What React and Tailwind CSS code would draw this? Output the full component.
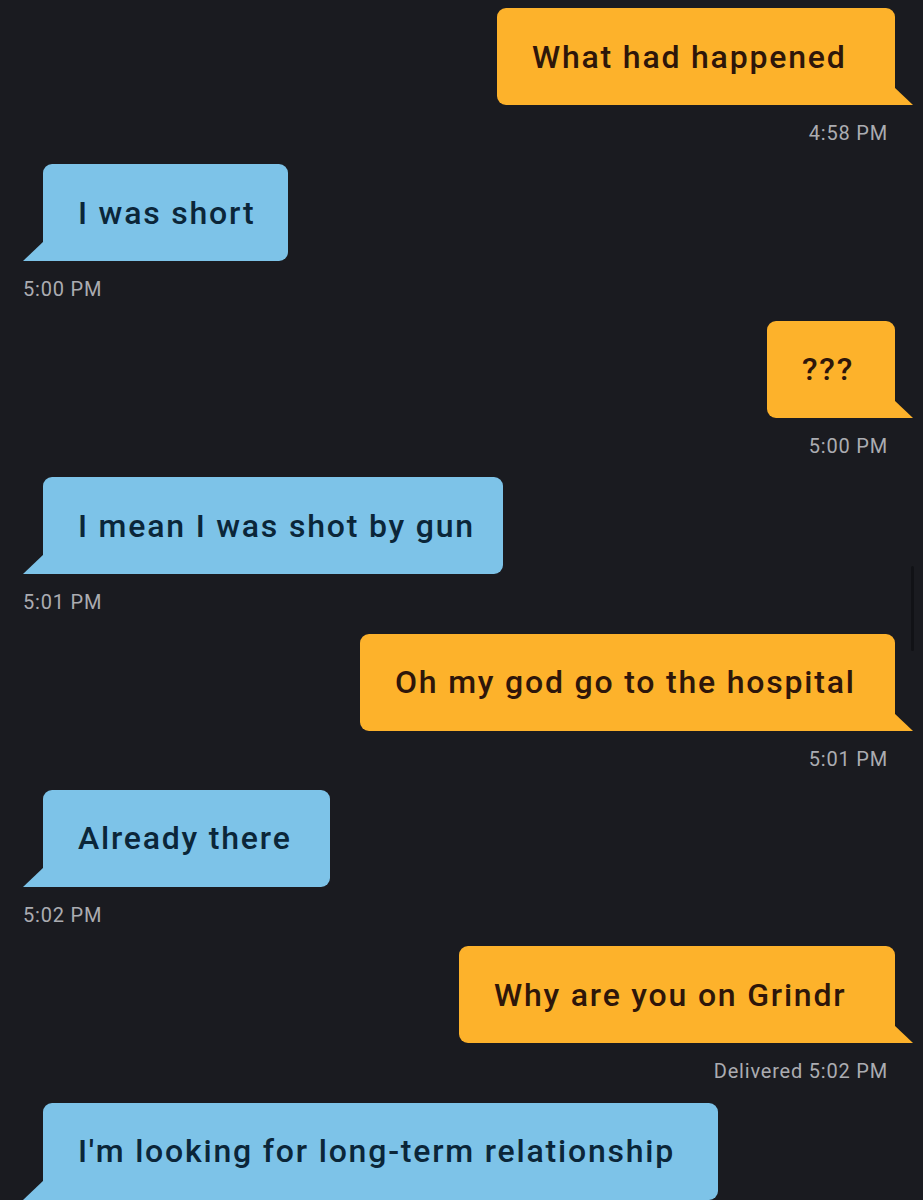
import React from "react";

const font = { fontFamily: "Roboto, 'Noto Sans', 'Liberation Sans', sans-serif" };

const messages = [
  { side: "right", text: "What had happened", w: "w-[398px]", time: "4:58 PM" },
  { side: "left", text: "I was short", w: "w-[245px]", time: "5:00 PM" },
  { side: "right", text: "???", w: "w-[128px]", time: "5:00 PM" },
  { side: "left", text: "I mean I was shot by gun", w: "w-[460px]", time: "5:01 PM" },
  { side: "right", text: "Oh my god go to the hospital", w: "w-[535px]", time: "5:01 PM" },
  { side: "left", text: "Already there", w: "w-[287px]", time: "5:02 PM" },
  { side: "right", text: "Why are you on Grindr", w: "w-[436px]", time: "Delivered 5:02 PM" },
  { side: "left", text: "I'm looking for long-term relationship", w: "w-[675px]", time: null },
];

function Bubble({ side, text, w }) {
  const isRight = side === "right";
  return (
    <div
      className={
        "relative h-[97px] flex items-center " +
        w +
        " " +
        (isRight
          ? "bg-[#fdb22b] text-[#2e160a] rounded-tl-[9px] rounded-tr-[9px] rounded-bl-[9px] pl-[35px]"
          : "bg-[#7dc3e8] text-[#0b2639] rounded-tl-[9px] rounded-tr-[9px] rounded-br-[9px] pl-[35px]")
      }
    >
      <span className="text-[32px] font-medium leading-none tracking-[1.8px] whitespace-nowrap" style={font}>
        {text}
      </span>
      {isRight ? (
        <svg className="absolute bottom-0 right-[-18px]" width="19" height="18" viewBox="0 0 19 18">
          <polygon points="0,0 19,18 0,18" fill="#fdb22b" />
        </svg>
      ) : (
        <svg className="absolute bottom-0 left-[-20px]" width="21" height="20" viewBox="0 0 21 20">
          <polygon points="21,0 0,20 21,20" fill="#7dc3e8" />
        </svg>
      )}
    </div>
  );
}

export default function App() {
  return (
    <div className="relative w-[923px] h-[1200px] overflow-hidden bg-[#1a1b20]">
      <div className="flex flex-col pt-[8px]">
        {messages.map((m, i) => (
          <div
            key={i}
            className={
              "flex flex-col " +
              (m.side === "right" ? "items-end pr-[28px]" : "items-start pl-[43px]")
            }
          >
            <Bubble side={m.side} text={m.text} w={m.w} />
            {m.time && (
              <div
                className={
                  "h-[59.4px] pt-[18px] text-[20px] leading-[20px] tracking-[0.8px] text-[#abacb1] " +
                  (m.side === "right" ? "pr-[7px]" : "ml-[-20px]")
                }
                style={font}
              >
                {m.time}
              </div>
            )}
          </div>
        ))}
      </div>
      <div className="absolute right-[9px] top-[566px] w-[3px] h-[85px] bg-[#111216] rounded-full" />
    </div>
  );
}
